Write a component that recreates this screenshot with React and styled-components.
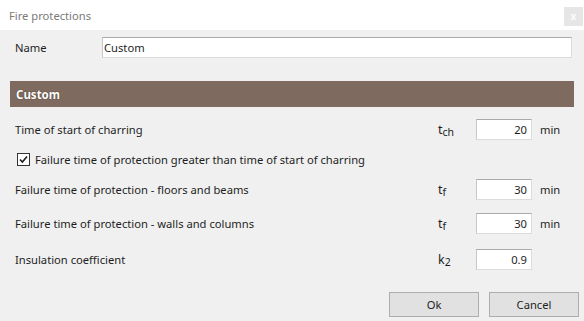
import React, { useState } from 'react';
import styled, { createGlobalStyle } from 'styled-components';

const GlobalStyle = createGlobalStyle`
  html, body {
    margin: 0;
    padding: 0;
    background: #f0f0f0;
  }
  body {
    font-family: "Noto Sans", "Open Sans", Arial, sans-serif;
    font-size: 11.2px;
    color: #1e1e1e;
  }
`;

const Window = styled.div`
  width: 584px;
  height: 321px;
  display: flex;
  flex-direction: column;
  background: #f0f0f0;
  overflow: hidden;
`;

const TitleBar = styled.div`
  height: 30px;
  flex-shrink: 0;
  background: #ffffff;
  display: flex;
  align-items: center;
  justify-content: space-between;
  padding-left: 9px;
  padding-right: 1px;
`;

const Title = styled.span`
  color: #7a7a7a;
  font-size: 11.2px;
`;

const CloseButton = styled.div`
  width: 19px;
  height: 19px;
  margin-top: 2px;
  background: #e6e6e6;
  color: #fbfbfb;
  font-size: 10px;
  font-weight: bold;
  display: flex;
  align-items: center;
  justify-content: center;
`;

const Content = styled.div`
  padding: 0 10px;
  display: flex;
  flex-direction: column;
`;

const NameRow = styled.div`
  margin-top: 7px;
  display: flex;
  align-items: center;
  padding-left: 5px;
  padding-right: 2px;
`;

const NameLabel = styled.span`
  width: 87px;
`;

const TextInput = styled.input`
  box-sizing: border-box;
  height: 21px;
  width: ${p => (p.$width ? `${p.$width}px` : 'auto')};
  flex: ${p => (p.$width ? 'none' : '1')};
  border: 1px solid #dcdcdc;
  border-top-color: #a9a9a9;
  border-left-color: #c8c8c8;
  background: #ffffff;
  font-family: inherit;
  font-size: 11.2px;
  color: #1e1e1e;
  padding: 0 ${p => (p.$right ? '4px' : '1px')} 0 1px;
  text-align: ${p => (p.$right ? 'right' : 'left')};
  outline: none;
`;

const SectionHeader = styled.div`
  margin-top: 23px;
  height: 26px;
  background: #7f6a60;
  color: #ffffff;
  font-weight: bold;
  font-size: 11.5px;
  display: flex;
  align-items: center;
  padding-left: 6px;
  text-shadow: 0 0 1px rgba(40, 20, 10, 0.9);
`;

const Form = styled.div`
  display: flex;
  flex-direction: column;
  padding-left: 5px;
  margin-top: 12px;
`;

const Row = styled.div`
  display: flex;
  align-items: center;
  height: 21px;
  margin-top: ${p => p.$gap}px;
`;

const Label = styled.span`
  flex: 1;
`;

const Symbol = styled.span`
  width: 38px;
  font-size: 12.5px;
  sub {
    font-size: 10.5px;
    vertical-align: -2px;
  }
`;

const Unit = styled.span`
  margin-left: 8px;
  width: 34px;
`;

const CheckLabel = styled.label`
  display: flex;
  align-items: center;
  gap: 5px;
  padding-left: 2px;
  cursor: pointer;
`;

const Box = styled.span`
  box-sizing: border-box;
  width: 13px;
  height: 13px;
  border: 1px solid #333333;
  background: #ffffff;
  display: flex;
  align-items: center;
  justify-content: center;
`;

const Footer = styled.div`
  margin-top: 22px;
  display: flex;
  justify-content: flex-end;
  gap: 10px;
  padding-right: 5px;
`;

const Button = styled.button`
  width: 90px;
  height: 25px;
  background: #e1e1e1;
  border: 1px solid #adadad;
  font-family: inherit;
  font-size: 11.2px;
  color: #1e1e1e;
  padding: 0;
`;

const ValueRow = ({ label, sym, sub, value, unit, gap }) => (
  <Row $gap={gap}>
    <Label>{label}</Label>
    <Symbol>
      {sym}
      <sub>{sub}</sub>
    </Symbol>
    <TextInput $width={56} $right defaultValue={value} />
    <Unit>{unit}</Unit>
  </Row>
);

const App = () => {
  const [checked, setChecked] = useState(true);

  return (
    <Window>
      <GlobalStyle />
      <TitleBar>
        <Title>Fire protections</Title>
        <CloseButton>x</CloseButton>
      </TitleBar>
      <Content>
        <NameRow>
          <NameLabel>Name</NameLabel>
          <TextInput defaultValue="Custom" />
        </NameRow>
        <SectionHeader>Custom</SectionHeader>
        <Form>
          <ValueRow label="Time of start of charring" sym="t" sub="ch" value="20" unit="min" gap={0} />
          <Row $gap={9}>
            <CheckLabel onClick={() => setChecked(!checked)}>
              <Box>
                {checked && (
                  <svg width="9" height="9" viewBox="0 0 9 9">
                    <path d="M1 4.5 L3.4 7 L8 1.5" fill="none" stroke="#1e1e1e" strokeWidth="1.6" />
                  </svg>
                )}
              </Box>
              Failure time of protection greater than time of start of charring
            </CheckLabel>
          </Row>
          <ValueRow label="Failure time of protection - floors and beams" sym="t" sub="f" value="30" unit="min" gap={9} />
          <ValueRow label="Failure time of protection - walls and columns" sym="t" sub="f" value="30" unit="min" gap={13} />
          <ValueRow label="Insulation coefficient" sym="k" sub="2" value="0.9" unit="" gap={15} />
        </Form>
      </Content>
      <Footer>
        <Button>Ok</Button>
        <Button>Cancel</Button>
      </Footer>
    </Window>
  );
};

export default App;
